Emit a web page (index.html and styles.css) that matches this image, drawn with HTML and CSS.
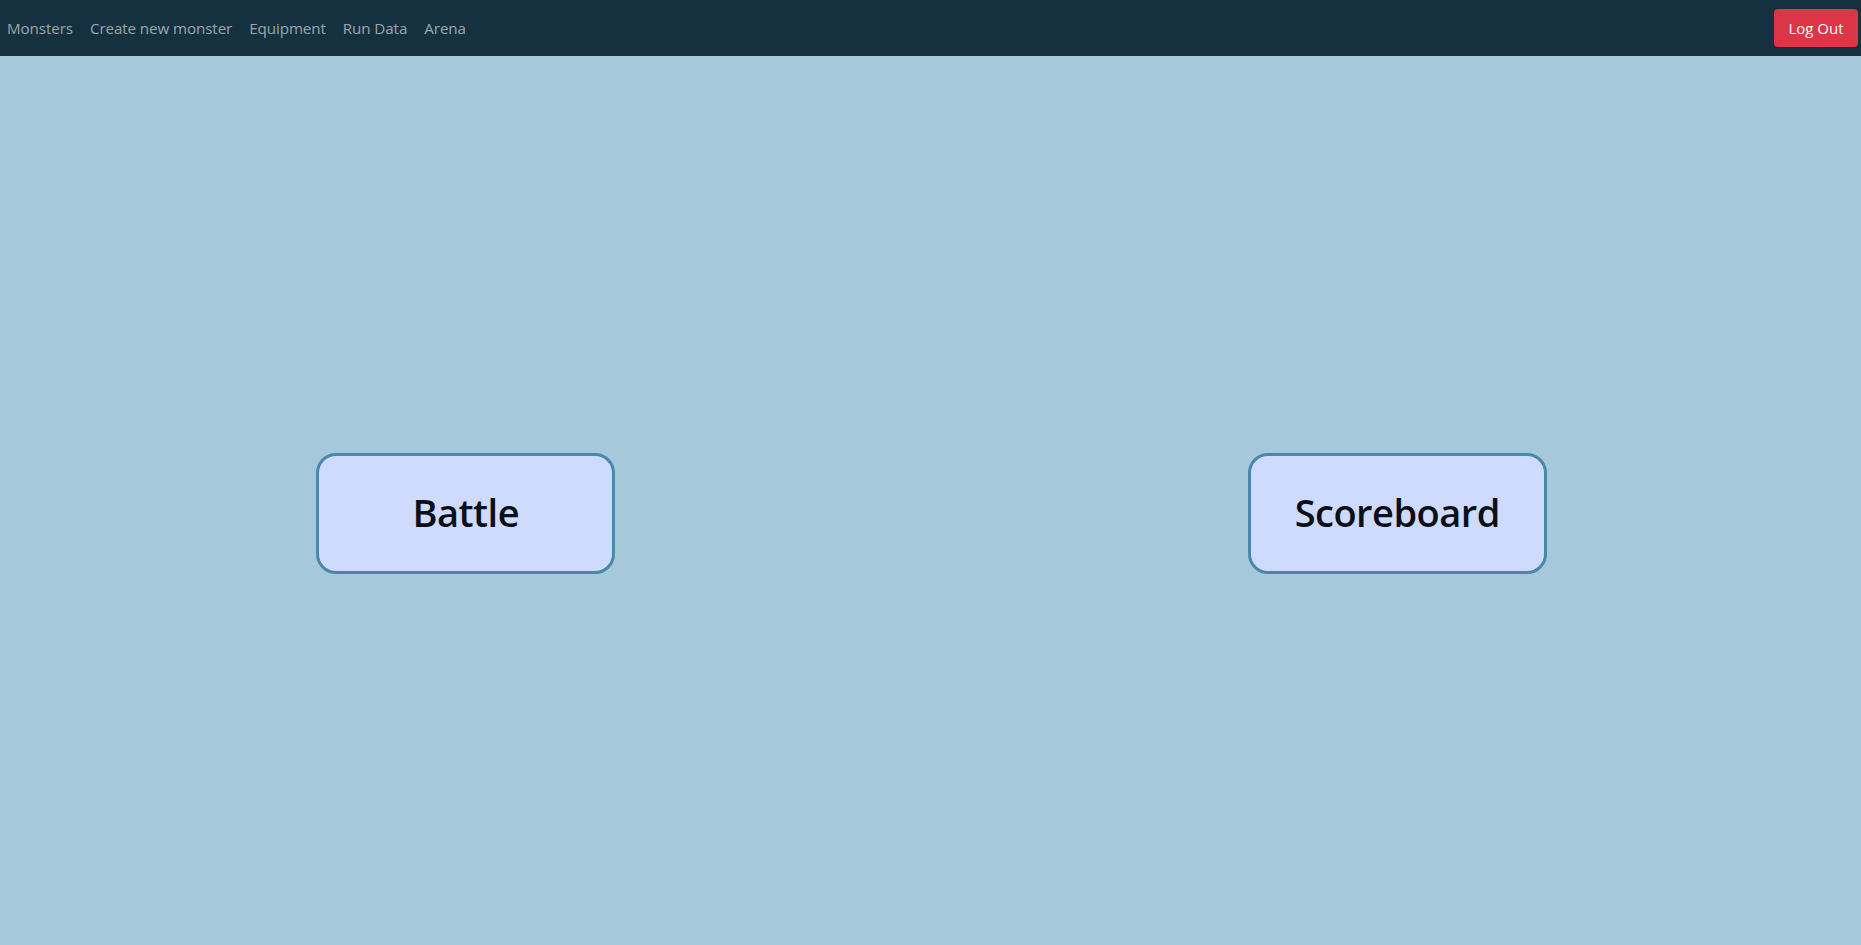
FILE: index.html
```html
<!DOCTYPE html>
<html lang="en">
<head>
<meta charset="utf-8">
<title>Arena</title>
<link rel="stylesheet" href="styles.css">
</head>
<body>
<nav class="navbar">
  <ul class="nav-links">
    <li><a href="#" class="nav-link">Monsters</a></li>
    <li><a href="#" class="nav-link">Create new monster</a></li>
    <li><a href="#" class="nav-link">Equipment</a></li>
    <li><a href="#" class="nav-link">Run Data</a></li>
    <li><a href="#" class="nav-link">Arena</a></li>
  </ul>
  <button class="logout">Log Out</button>
</nav>
<main class="arena">
  <div class="half"><a href="#" class="choice">Battle</a></div>
  <div class="half"><a href="#" class="choice">Scoreboard</a></div>
</main>
</body>
</html>
```

FILE: styles.css
```css
* { box-sizing: border-box; }
html, body { margin: 0; height: 100%; }
body {
  background: #a6c8db;
  font-family: "Open Sans", "Noto Sans", "Liberation Sans", sans-serif;
  display: flex;
  flex-direction: column;
}
.navbar {
  height: 56px;
  background: #15303f;
  display: flex;
  align-items: center;
  justify-content: space-between;
  padding: 0 3px 0 0;
  flex: none;
}
.nav-links {
  list-style: none;
  margin: 0;
  padding: 0;
  display: flex;
}
.nav-link {
  display: block;
  padding: 8px 8.5px;
  color: rgba(255,255,255,0.58);
  text-decoration: none;
  font-size: 15.2px;
  letter-spacing: -0.1px;
}
.nav-links li:first-child .nav-link { padding-left: 7px; }
.logout {
  background: #dc3545;
  color: #fff;
  border: none;
  border-radius: 4px;
  width: 84px;
  height: 38px;
  font-family: inherit;
  font-size: 15px;
}
.arena {
  flex: 1;
  display: grid;
  grid-template-columns: 1fr 1fr;
  column-gap: 4px;
  align-items: center;
  padding: 26px 0 0 2px;
}
.half {
  display: flex;
  justify-content: center;
}
.choice {
  width: 299px;
  height: 121px;
  background: #cfdbfc;
  border: 3px solid #4888aa;
  border-radius: 20px;
  display: flex;
  align-items: center;
  justify-content: center;
  padding-bottom: 4px;
  color: #0b0f17;
  text-decoration: none;
  font-size: 38px;
  font-weight: 600;
  letter-spacing: -0.5px;
}
```
